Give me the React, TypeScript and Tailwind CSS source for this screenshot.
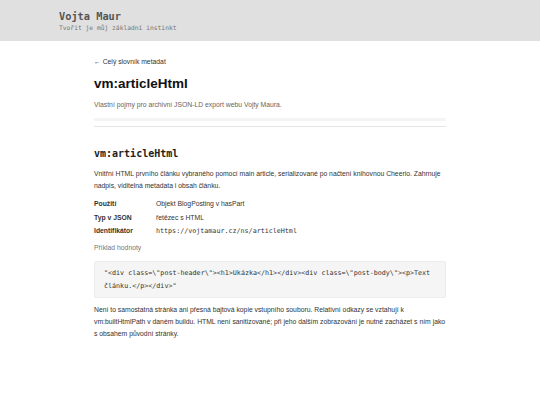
export default function App() {
  const mono = { fontFamily: '"DejaVu Sans Mono", "Liberation Mono", monospace' };

  return (
    <div className="min-h-screen bg-white text-[#333]" style={{ fontFamily: '"Liberation Sans", Arial, sans-serif' }}>
      {/* Hlavička */}
      <header className="bg-[#e0e0e0] h-[41px] px-[59px] pt-[10px]" style={mono}>
        <div className="text-[10.3px] font-bold leading-[12px] text-[#555]">Vojta Maur</div>
        <div className="text-[6.3px] leading-[10px] mt-[1px] text-[#777]">Tvořit je můj základní instinkt</div>
      </header>

      <main className="max-w-[352px] mx-auto pt-[16px]">
        <a href="#" className="block text-[6.8px] leading-[10px] text-[#333]">← Celý slovník metadat</a>

        <h1 className="mt-[9px] text-[13.5px] font-bold leading-[16px] text-[#111]">vm:articleHtml</h1>
        <p className="mt-[8px] text-[6.8px] leading-[10px] text-[#666]">
          Vlastní pojmy pro archivní JSON-LD export webu Vojty Maura.
        </p>

        <div className="mt-[8px] h-[3px] bg-[#f4f4f4]" />
        <div className="mt-[5px] h-px bg-[#e6e6e6]" />

        <section className="pt-[21px]">
          <h2 className="text-[10px] font-bold leading-[12px] text-[#222]" style={mono}>vm:articleHtml</h2>

          <p className="mt-[8px] text-[6.8px] leading-[12px]">
            Vnitřní HTML prvního článku vybraného pomocí main article, serializované po načtení knihovnou Cheerio. Zahrnuje
            nadpis, viditelná metadata i obsah článku.
          </p>

          <div className="mt-[7px] grid grid-cols-[62px_1fr] gap-y-[3.5px] text-[6.8px] leading-[10px]">
            <div className="font-bold">Použití</div>
            <div>Objekt BlogPosting v hasPart</div>
            <div className="font-bold">Typ v JSON</div>
            <div>řetězec s HTML</div>
            <div className="font-bold">Identifikátor</div>
            <div className="text-[6.7px]" style={mono}>https://vojtamaur.cz/ns/articleHtml</div>
          </div>

          <div className="mt-[7px] text-[6.8px] leading-[10px] text-[#777]">Příklad hodnoty</div>

          <pre
            className="mt-[8px] bg-[#f5f5f5] border border-[#ececec] rounded-[2px] px-[9px] py-[5px] text-[6.7px] leading-[12.5px] text-[#333] whitespace-pre-wrap"
            style={mono}
          >
            {'"<div class=\\"post-header\\"><h1>Ukázka</h1></div><div class=\\"post-body\\"><p>Text článku.</p></div>"'}
          </pre>

          <p className="mt-[6px] text-[6.8px] leading-[12px]">
            Není to samostatná stránka ani přesná bajtová kopie vstupního souboru. Relativní odkazy se vztahují k
            vm:builtHtmlPath v daném buildu. HTML není sanitizované; při jeho dalším zobrazování je nutné zacházet s ním jako
            s obsahem původní stránky.
          </p>
        </section>
      </main>
    </div>
  );
}
